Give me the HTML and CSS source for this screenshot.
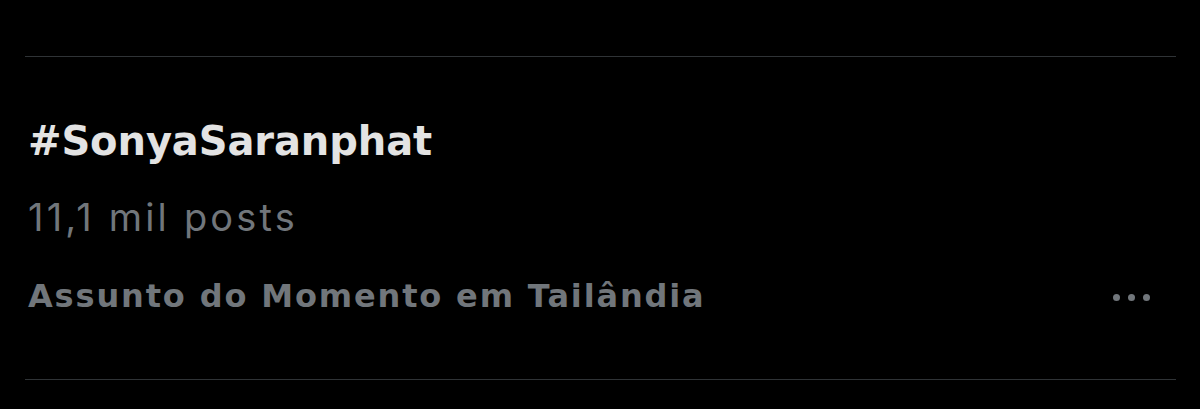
FILE: index.html
```html
<!DOCTYPE html>
<html lang="pt">
<head>
<meta charset="utf-8">
<link rel="stylesheet" href="styles.css">
</head>
<body>
<div class="page">
  <div class="trend">
    <div class="title">#SonyaSaranphat</div>
    <div class="count">11,1 mil posts</div>
    <div class="meta-row">
      <div class="meta">Assunto do Momento em Tailândia</div>
      <div class="more" aria-label="Mais">
        <span class="dot"></span><span class="dot"></span><span class="dot"></span>
      </div>
    </div>
  </div>
</div>
</body>
</html>
```
FILE: styles.css
```css
html, body {
  margin: 0;
  padding: 0;
  background: #000;
}
body {
  width: 1200px;
  height: 409px;
  overflow: hidden;
  font-family: Inter, "Liberation Sans", sans-serif;
}
.page {
  padding: 56px 24px 0 25px;
}
.trend {
  border-top: 1px solid #2f3336;
  border-bottom: 1px solid #2f3336;
  padding: 60px 0 0 3px;
  height: 324px;
  box-sizing: border-box;
  display: flex;
  flex-direction: column;
}
.title {
  color: #e3e3e3;
  font-family: "DejaVu Sans", Inter, sans-serif;
  font-weight: 700;
  font-size: 40px;
  line-height: 48px;
  letter-spacing: -0.1px;
}
.count {
  color: #71767b;
  font-weight: 400;
  font-size: 38px;
  line-height: 46px;
  letter-spacing: 3.2px;
  margin-top: 29px;
}
.meta-row {
  display: flex;
  align-items: center;
  justify-content: space-between;
  margin-top: 37px;
}
.meta {
  color: #71767b;
  font-family: "DejaVu Sans", Inter, sans-serif;
  font-weight: 700;
  font-size: 32px;
  line-height: 38px;
  letter-spacing: 1.85px;
}
.more {
  display: flex;
  gap: 8px;
  margin: 2px 26px 0 0;
}
.dot {
  width: 7px;
  height: 7px;
  border-radius: 50%;
  background: #71767b;
}
```
